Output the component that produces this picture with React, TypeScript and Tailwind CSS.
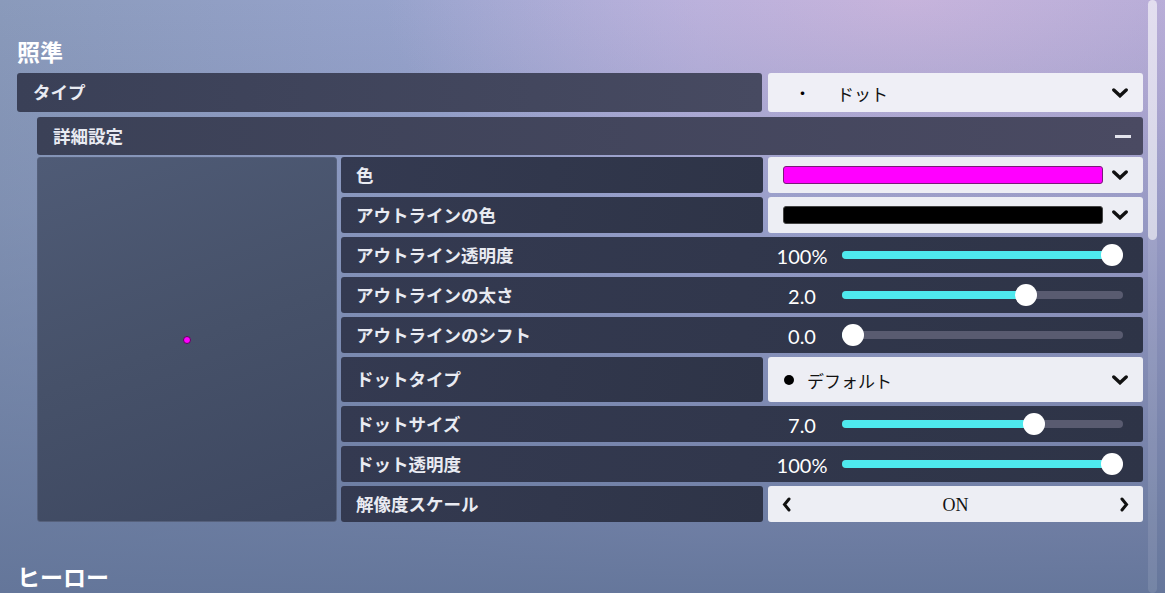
import type { ReactNode } from 'react'

function ChevronDown() {
  return (
    <svg width="16" height="10" viewBox="0 0 16 10" className="shrink-0">
      <path d="M1.8 2 L8 7.8 L14.2 2" stroke="#111" strokeWidth="3.4" fill="none" strokeLinecap="round" strokeLinejoin="miter" />
    </svg>
  )
}

function ChevronSide({ dir }: { dir: 'left' | 'right' }) {
  return (
    <svg width="9" height="15" viewBox="0 0 9 15" className="shrink-0">
      <path
        d={dir === 'left' ? 'M7 2 L2.5 7.5 L7 13' : 'M2 2 L6.5 7.5 L2 13'}
        stroke="#111"
        strokeWidth="3"
        fill="none"
        strokeLinecap="round"
        strokeLinejoin="miter"
      />
    </svg>
  )
}

function LabelBox({ children, className = '' }: { children: ReactNode; className?: string }) {
  return (
    <div className={`flex flex-1 items-center rounded-[3px] bg-[linear-gradient(100deg,#343a51,#2e3447)] pl-[15px] text-[17.5px] font-bold text-[#e9ebf2] ${className}`}>
      {children}
    </div>
  )
}

function Control({ children, className = '' }: { children: ReactNode; className?: string }) {
  return (
    <div className={`flex w-[375px] shrink-0 items-center rounded-[3px] bg-[#edeef4] ${className}`}>
      {children}
    </div>
  )
}

function ColorRow({ label, color, border }: { label: string; color: string; border: string }) {
  return (
    <div className="flex h-[36px] gap-[5px]">
      <LabelBox>{label}</LabelBox>
      <Control>
        <div className="ml-[15px] h-[18px] w-[320px] rounded-[3px] border" style={{ background: color, borderColor: border }} />
        <div className="ml-[9px]">
          <ChevronDown />
        </div>
      </Control>
    </div>
  )
}

function SliderRow({ label, value, frac }: { label: string; value: string; frac: number }) {
  return (
    <div className="flex h-[36px] items-center rounded-[3px] bg-[linear-gradient(100deg,#343a51,#2e3447)]">
      <div className="w-[426px] pl-[15px] text-[17.5px] font-bold text-[#e9ebf2]">{label}</div>
      <div className="w-[70px] pt-[2px] text-center font-['Lato',sans-serif] text-[20px] text-white">{value}</div>
      <div className="relative ml-[5px] h-[8px] w-[281px] rounded-full bg-[#595b70]">
        <div className="h-full rounded-full bg-[#4ee9ee]" style={{ width: 11 + frac * 259 }} />
        <div className="absolute top-[-7px] h-[22px] w-[22px] rounded-full bg-white" style={{ left: frac * 259 }} />
      </div>
    </div>
  )
}

export default function App() {
  return (
    <div className="relative h-[593px] w-[1165px] overflow-hidden bg-[linear-gradient(180deg,rgba(96,114,150,0)_0%,rgba(96,114,150,0.25)_35%,rgba(98,116,152,0.95)_100%),radial-gradient(ellipse_60%_55%_at_78%_0%,rgba(200,180,220,0.95),rgba(200,180,220,0)_75%),linear-gradient(90deg,#8a9abb_0%,#97a3cc_35%,#aaaedc_60%,#aaa7d4_100%)] font-['Noto_Sans_CJK_JP','Noto_Sans',sans-serif]">
      <div className="flex flex-col pl-[17px] pr-[22px]">
        <h2 className="mt-[37px] text-[23px] font-bold leading-[28px] text-white">照準</h2>

        <div className="mt-[8px] flex h-[39px] gap-[6px]">
          <div className="flex flex-1 items-center rounded-[3px] bg-[linear-gradient(90deg,#3a4057,#474a61)] pl-[16px] text-[17.5px] font-bold text-[#e9ebf2]">
            タイプ
          </div>
          <Control className="bg-[#efeff6]">
            <span className="ml-[26px] w-[17px] text-[17px] text-black">・</span>
            <span className="ml-[26px] flex-1 pt-[2px] text-[17px] text-[#111]">ドット</span>
            <div className="mr-[15px]">
              <ChevronDown />
            </div>
          </Control>
        </div>

        <div className="ml-[20px] mt-[5px] flex h-[38px] items-center justify-between rounded-[3px] bg-[linear-gradient(90deg,#3b4157,#4a4a62)] pl-[16px] pr-[12px]">
          <span className="text-[17.5px] font-bold text-[#e9ebf2]">詳細設定</span>
          <div className="h-[3px] w-[16px] bg-[#e2e3ec]" />
        </div>

        <div className="ml-[20px] mt-[2px] flex gap-[4px]">
          <div className="flex w-[300px] shrink-0 items-center justify-center rounded-[3px] border border-[#56617c] bg-[linear-gradient(160deg,#4f5b76_0%,#465169_50%,#3d4760_100%)]">
            <div className="h-[8px] w-[8px] rounded-full border border-[#5a0a5a] bg-[#ff00ff]" />
          </div>

          <div className="flex flex-1 flex-col gap-[4px]">
            <ColorRow label="色" color="#ff00ff" border="#7a1a7a" />
            <ColorRow label="アウトラインの色" color="#000000" border="#444" />
            <SliderRow label="アウトライン透明度" value="100%" frac={1} />
            <SliderRow label="アウトラインの太さ" value="2.0" frac={0.668} />
            <SliderRow label="アウトラインのシフト" value="0.0" frac={0} />
            <div className="flex h-[45px] gap-[5px]">
              <LabelBox>ドットタイプ</LabelBox>
              <Control className="bg-[#e9eaf0]">
                <div className="ml-[16px] h-[10px] w-[10px] rounded-full bg-black" />
                <span className="ml-[13px] flex-1 pt-[2px] text-[17px] text-[#111]">デフォルト</span>
                <div className="mr-[15px]">
                  <ChevronDown />
                </div>
              </Control>
            </div>
            <SliderRow label="ドットサイズ" value="7.0" frac={0.7} />
            <SliderRow label="ドット透明度" value="100%" frac={1} />
            <div className="flex h-[36px] gap-[5px]">
              <LabelBox>解像度スケール</LabelBox>
              <Control className="bg-[#e9eaf0] px-[14px]">
                <ChevronSide dir="left" />
                <span className="flex-1 pt-[3px] text-center font-['Liberation_Serif',serif] text-[18px] text-[#111]">ON</span>
                <ChevronSide dir="right" />
              </Control>
            </div>
          </div>
        </div>

        <h2 className="mt-[40px] text-[23px] font-bold leading-[28px] text-white">ヒーロー</h2>
      </div>

      <div className="absolute right-[8px] top-0 h-full w-[9px] rounded-full bg-white/10">
        <div className="h-[240px] w-full rounded-full bg-white/55" />
      </div>
    </div>
  )
}
